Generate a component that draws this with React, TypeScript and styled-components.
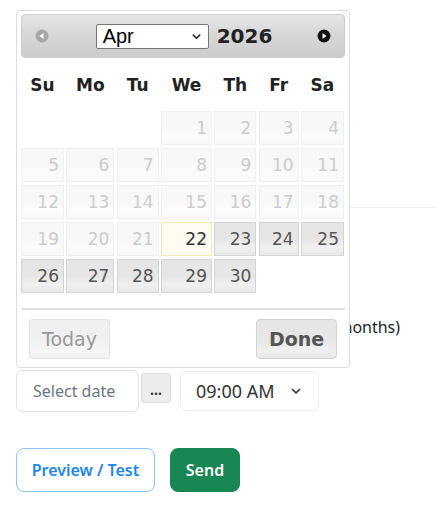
import React from 'react';
import styled, { createGlobalStyle, css } from 'styled-components';

const GlobalStyle = createGlobalStyle`
  html, body {
    margin: 0;
    padding: 0;
    background: #fff;
  }
  body {
    font-family: "Noto Sans", "DejaVu Sans", sans-serif;
    color: #212529;
  }
`;

const Page = styled.div`
  position: relative;
  width: 437px;
  height: 506px;
  overflow: hidden;
`;

const Form = styled.div`
  padding: 0 16px;
`;

const Divider = styled.div`
  margin: 207px -16px 0 0;
  border-top: 1px solid #efefef;
`;

const ScheduleLabel = styled.label`
  display: flex;
  align-items: center;
  gap: 15px;
  margin-top: 107px;
  font-size: 16px;
  line-height: 24px;
  white-space: nowrap;
  color: #212529;
`;

const Radio = styled.input`
  width: 16px;
  height: 16px;
  margin: 0;
`;

const ControlsRow = styled.div`
  display: flex;
  align-items: flex-start;
  margin-top: 31px;
`;

const DateInput = styled.input`
  box-sizing: border-box;
  width: 123px;
  height: 42px;
  padding: 0 16px;
  border: 1px solid #dee2e6;
  border-radius: 6px;
  font-family: inherit;
  font-size: 16px;
  color: #212529;
  outline: none;
  &::placeholder {
    color: #6c757d;
  }
`;

const TriggerButton = styled.button`
  box-sizing: border-box;
  width: 30px;
  height: 30px;
  margin: 3px 0 0 2px;
  padding: 2px 0 0;
  border: 1px solid #dcdcdc;
  border-radius: 3px;
  background: #ececec;
  font-family: inherit;
  font-size: 14px;
  font-weight: 700;
  color: #333;
`;

const TimeSelect = styled.div`
  box-sizing: border-box;
  display: flex;
  align-items: center;
  justify-content: space-between;
  width: 139px;
  height: 40px;
  margin: 1px 0 0 9px;
  padding: 0 16px 0 15px;
  border: 1px solid #eeeeee;
  border-radius: 6px;
  font-size: 18px;
  color: #333;
`;

const ActionsRow = styled.div`
  display: flex;
  gap: 15px;
  margin-top: 36px;
`;

const ActionButton = styled.button<{ $variant: 'outline' | 'success' }>`
  box-sizing: border-box;
  height: 44px;
  padding: 0;
  border-radius: 8px;
  font-family: inherit;
  font-size: 16px;
  font-weight: 600;
  white-space: nowrap;
  ${p =>
    p.$variant === 'outline'
      ? css`
          width: 139px;
          border: 1px solid #8ec3f7;
          background: #fff;
          color: #1c86ee;
        `
      : css`
          width: 70px;
          border: 1px solid #198754;
          background: #198754;
          color: #fff;
        `}
`;

/* ---------- datepicker overlay ---------- */

const Picker = styled.div`
  position: absolute;
  left: 16px;
  top: 10px;
  z-index: 10;
  box-sizing: border-box;
  width: 334px;
  height: 358px;
  padding: 3px 4px 0;
  border: 1px solid #dddddd;
  border-radius: 4px;
  background: #fff;
  font-family: "DejaVu Sans", Verdana, sans-serif;
`;

const Header = styled.div`
  box-sizing: border-box;
  display: flex;
  align-items: center;
  height: 44px;
  padding: 0 12px;
  border: 1px solid #cccccc;
  border-radius: 4px;
  background: linear-gradient(to bottom, #e6e6e6 0%, #d6d6d6 50%, #cdcdcd 100%);
`;

const NavIcon = styled.svg`
  width: 16px;
  height: 16px;
  flex: none;
`;

const Title = styled.div`
  flex: 1;
  display: flex;
  align-items: center;
  justify-content: center;
  gap: 8px;
  padding-left: 2px;
`;

const MonthSelect = styled.div`
  box-sizing: border-box;
  display: flex;
  align-items: center;
  justify-content: space-between;
  width: 113px;
  height: 25px;
  padding: 0 6px 0 6px;
  border: 1px solid #767676;
  border-radius: 2px;
  background: #fff;
  font-family: "Liberation Sans", Arial, sans-serif;
  font-size: 20px;
  color: #000;
`;

const Year = styled.span`
  font-size: 20px;
  font-weight: 700;
  color: #222;
`;

const columns = '43px 48px 42px 51px 42px 40px 43px';

const WeekHeader = styled.div`
  display: grid;
  grid-template-columns: ${columns};
  column-gap: 2.33px;
  height: 53px;
  align-items: center;
`;

const WeekDay = styled.span`
  text-align: center;
  font-size: 17px;
  font-weight: 700;
  color: #222;
`;

const DayGrid = styled.div`
  display: grid;
  grid-template-columns: ${columns};
  column-gap: 2.33px;
  row-gap: 3px;
`;

type DayKind = 'empty' | 'disabled' | 'today' | 'active';

const DayCell = styled.span<{ $kind: DayKind }>`
  box-sizing: border-box;
  height: 34px;
  padding-right: 4px;
  border: 1px solid transparent;
  text-align: right;
  font-size: 17px;
  line-height: 32px;
  ${p => {
    switch (p.$kind) {
      case 'disabled':
        return css`
          border-color: #f0f0f0;
          background: linear-gradient(to bottom, #f8f8f8 0%, #f8f8f8 50%, #fbfbfb 75%, #f8f8f8 100%);
          color: #cccccc;
        `;
      case 'today':
        return css`
          border-color: #f6eab4;
          background: #fefcf2;
          color: #333;
        `;
      case 'active':
        return css`
          border-color: #d3d3d3;
          background: linear-gradient(to bottom, #e6e6e6 0%, #e6e6e6 50%, #f0f0f0 75%, #e9e9e9 100%);
          color: #555;
        `;
      default:
        return css`
          border-color: transparent;
        `;
    }
  }}
`;

const ButtonPane = styled.div`
  display: flex;
  justify-content: space-between;
  margin-top: 15px;
  padding: 9px 8px 0;
  border-top: 2px solid #e2e2e2;
`;

const PaneButton = styled.button<{ $primary?: boolean }>`
  box-sizing: border-box;
  width: 81px;
  height: 40px;
  padding: 0;
  border: 1px solid ${p => (p.$primary ? '#d3d3d3' : '#e2e2e2')};
  border-radius: 4px;
  font-family: "DejaVu Sans", Verdana, sans-serif;
  font-size: 19px;
  font-weight: ${p => (p.$primary ? 700 : 400)};
  color: ${p => (p.$primary ? '#555' : '#999')};
  background: ${p =>
    p.$primary
      ? 'linear-gradient(to bottom, #e6e6e6 0%, #e6e6e6 50%, #efefef 80%, #e8e8e8 100%)'
      : 'linear-gradient(to bottom, #f0f0f0 0%, #f0f0f0 50%, #f6f6f6 80%, #f2f2f2 100%)'};
`;

const weekDays = ['Su', 'Mo', 'Tu', 'We', 'Th', 'Fr', 'Sa'];
const today = 22;

function buildDays(): { day: number | null; kind: DayKind }[] {
  const cells: { day: number | null; kind: DayKind }[] = [];
  for (let i = 0; i < 3; i++) cells.push({ day: null, kind: 'empty' });
  for (let d = 1; d <= 30; d++) {
    const kind: DayKind = d < today ? 'disabled' : d === today ? 'today' : 'active';
    cells.push({ day: d, kind });
  }
  return cells;
}

const PrevIcon = () => (
  <NavIcon viewBox="0 0 16 16">
    <circle cx="8" cy="8" r="6.5" fill="#a6a6a6" />
    <path d="M5.5 8 L9.5 5 L9.5 11 Z" fill="#fff" />
  </NavIcon>
);

const NextIcon = () => (
  <NavIcon viewBox="0 0 16 16">
    <circle cx="8" cy="8" r="6.5" fill="#111" />
    <path d="M10.5 8 L6.5 5 L6.5 11 Z" fill="#fff" />
  </NavIcon>
);

const Chevron = ({ size = 12, color = '#333' }: { size?: number; color?: string }) => (
  <svg width={size} height={size} viewBox="0 0 12 12">
    <path d="M2.5 4.5 L6 8 L9.5 4.5" fill="none" stroke={color} strokeWidth="1.6" strokeLinecap="round" strokeLinejoin="round" />
  </svg>
);

const Datepicker: React.FC = () => (
  <Picker>
    <Header>
      <PrevIcon />
      <Title>
        <MonthSelect>
          <span>Apr</span>
          <Chevron size={11} color="#222" />
        </MonthSelect>
        <Year>2026</Year>
      </Title>
      <NextIcon />
    </Header>
    <WeekHeader>
      {weekDays.map(w => (
        <WeekDay key={w}>{w}</WeekDay>
      ))}
    </WeekHeader>
    <DayGrid>
      {buildDays().map((c, i) => (
        <DayCell key={i} $kind={c.kind}>
          {c.day ?? ''}
        </DayCell>
      ))}
    </DayGrid>
    <ButtonPane>
      <PaneButton>Today</PaneButton>
      <PaneButton $primary>Done</PaneButton>
    </ButtonPane>
  </Picker>
);

export default function App() {
  return (
    <>
      <GlobalStyle />
      <Page>
        <Form>
          <Divider />
          <ScheduleLabel>
            <Radio type="radio" name="when" defaultChecked />
            Schedule send for a later time (up to 3 months)
          </ScheduleLabel>
          <ControlsRow>
            <DateInput placeholder="Select date" />
            <TriggerButton>...</TriggerButton>
            <TimeSelect>
              <span>09:00 AM</span>
              <Chevron />
            </TimeSelect>
          </ControlsRow>
          <ActionsRow>
            <ActionButton $variant="outline">Preview / Test</ActionButton>
            <ActionButton $variant="success">Send</ActionButton>
          </ActionsRow>
        </Form>
        <Datepicker />
      </Page>
    </>
  );
}
